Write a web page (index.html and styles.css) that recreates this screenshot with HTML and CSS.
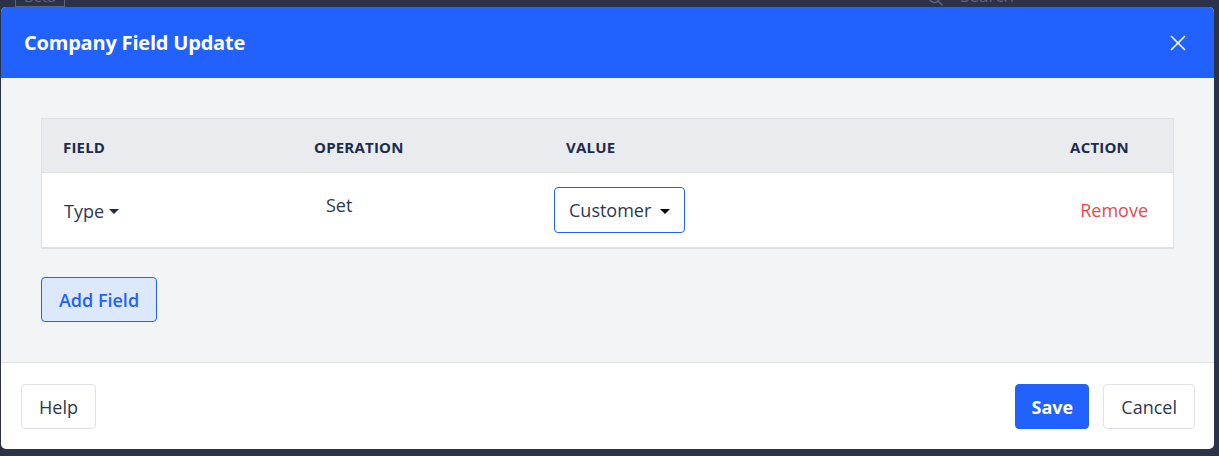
FILE: index.html
```html
<!DOCTYPE html>
<html lang="en">

<head>
    <meta charset="UTF-8">
    <title>Company Field Update</title>
    <link rel="stylesheet" href="styles.css">
</head>

<body>

    <div class="page">
        <div class="topbar">
            <span class="beta">Beta</span>
            <span class="search">
                <svg width="16" height="16" viewBox="0 0 16 16" fill="none" stroke="#5b6780" stroke-width="1.6">
                    <circle cx="6.5" cy="6.5" r="5"></circle>
                    <line x1="10.2" y1="10.2" x2="14.5" y2="14.5"></line>
                </svg>
                Search
            </span>
        </div>
    </div>

    <div class="modal">
        <header class="modal-head">
            <h1>Company Field Update</h1>
            <button class="close" aria-label="Close">
                <svg width="18" height="18" viewBox="0 0 18 18" stroke="#fff" stroke-width="1.6">
                    <line x1="2" y1="2" x2="16" y2="16"></line>
                    <line x1="16" y1="2" x2="2" y2="16"></line>
                </svg>
            </button>
        </header>

        <section class="modal-body">
            <div class="fields">
                <div class="row head">
                    <div class="cell">Field</div>
                    <div class="cell">Operation</div>
                    <div class="cell">Value</div>
                    <div class="cell action">Action</div>
                </div>
                <div class="row">
                    <div class="cell field">Type <span class="caret"></span></div>
                    <div class="cell op">Set</div>
                    <div class="cell">
                        <button class="select">Customer <span class="caret big"></span></button>
                    </div>
                    <div class="cell action"><a class="remove" href="#">Remove</a></div>
                </div>
            </div>

            <button class="btn add">Add Field</button>
        </section>

        <footer class="modal-foot">
            <button class="btn plain">Help</button>
            <div class="right">
                <button class="btn primary">Save</button>
                <button class="btn plain">Cancel</button>
            </div>
        </footer>
    </div>

</body></html>
```

FILE: styles.css
```css
* {
    margin: 0px;
    padding: 0px;
    box-sizing: border-box;
}

body {
    background: #2b3349;
    font-family: "Open Sans", "Noto Sans", sans-serif;
    color: #2b3852;
    height: 456px;
    overflow: hidden;
}

.page {
    height: 456px;
}

.topbar {
    display: flex;
    justify-content: space-between;
    height: 7px;
    overflow: hidden;
    padding: 0 205px 0 15px;
}

.beta {
    display: block;
    margin-top: -14px;
    padding: 0 8px;
    border: 1px solid #5b6780;
    border-top: 0;
    height: 21px;
    font-size: 15px;
    line-height: 20px;
    color: #5b6780;
}

.search {
    display: flex;
    align-items: flex-end;
    gap: 16px;
    margin-top: -12px;
    font-size: 17px;
    color: #5b6780;
}

.modal {
    position: absolute;
    top: 7px;
    left: 1px;
    width: 1213px;
    height: 442px;
    display: flex;
    flex-direction: column;
    border-radius: 5px;
    overflow: hidden;
    background: #fff;
}

.modal-head {
    height: 71px;
    flex-shrink: 0;
    background: #2162fe;
    display: flex;
    align-items: center;
    justify-content: space-between;
    padding: 0 27px 0 23px;
}

.modal-head h1 {
    color: #fff;
    font-size: 20px;
    font-weight: 700;
    letter-spacing: -0.2px;
}

.close {
    background: none;
    border: 0;
    display: flex;
}

.modal-body {
    height: 284px;
    flex-shrink: 0;
    background: #f3f4f6;
    padding: 40px 40px 0 40px;
}

.fields {
    border: 1px solid #dfe1e6;
    border-bottom-width: 2px;
    background: #fff;
}

.row {
    display: grid;
    grid-template-columns: 251px 252px 1fr 200px;
    align-items: center;
    height: 74px;
}

.row.head {
    height: 54px;
    background: #e9ebef;
    border-bottom: 1px solid #dfe1e6;
}

.cell {
    padding-left: 21px;
    font-size: 18px;
}

.head .cell {
    font-size: 15px;
    font-weight: 700;
    text-transform: uppercase;
    color: #1d2b4b;
    letter-spacing: 0.2px;
    padding-top: 2px;
}

.cell.action {
    text-align: right;
    padding-right: 44px;
}

.row .cell.action .remove {
    margin-right: -19px;
}

.field {
    padding-left: 22px;
    display: flex;
    align-items: center;
    gap: 5px;
    padding-top: 1px;
}

.op {
    padding-left: 33px;
    margin-top: -11px;
}

.caret {
    display: inline-block;
    width: 0;
    height: 0;
    border-left: 5px solid transparent;
    border-right: 5px solid transparent;
    border-top: 5px solid #1d2b4b;
    margin-top: 2px;
}

.caret.big {
    border-left-width: 5.5px;
    border-right-width: 5.5px;
    border-top: 5.5px solid #000;
    margin-left: 4px;
    margin-top: 0;
    vertical-align: 3px;
}

.select {
    margin-left: -12px;
    height: 46px;
    width: 131px;
    background: #fff;
    border: 1px solid #2162fe;
    border-radius: 4px;
    font-family: inherit;
    font-size: 18px;
    color: #2b3852;
    text-align: left;
    padding: 0 0 0 14px;
    margin-top: 0px;
}

.remove {
    color: #e5484d;
    text-decoration: none;
    font-size: 18px;
}

.btn {
    height: 45px;
    border-radius: 4px;
    font-family: inherit;
    font-size: 18px;
    padding: 0 17px;
    cursor: pointer;
}

.add {
    margin-top: 28px;
    width: 116px;
    padding: 0;
    background: #dce9fd;
    border: 1px solid #2162fe;
    color: #2162fe;
    font-weight: 600;
}

.modal-foot {
    flex: 1;
    border-top: 1px solid #dfe1e6;
    display: flex;
    justify-content: space-between;
    padding: 21px 19px 0 20px;
}

.right {
    display: flex;
    gap: 14px;
}

.plain {
    background: #fff;
    border: 1px solid #dfe1e6;
    color: #2b3852;
}

.primary {
    background: #2162fe;
    border: 1px solid #2162fe;
    color: #fff;
    font-weight: 700;
    width: 74px;
    padding: 0;
}
```
